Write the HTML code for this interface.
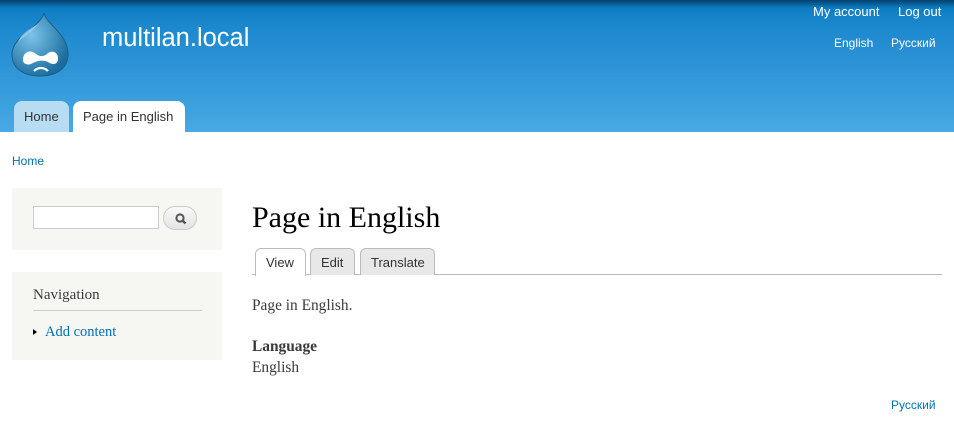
<!DOCTYPE html>
<html><head><meta charset="utf-8"><style>
*{margin:0;padding:0;box-sizing:border-box}
body{width:954px;height:431px;background:#fff;font-family:Georgia,"Liberation Serif",serif;position:relative;overflow:hidden}
#hdr{position:absolute;left:0;top:0;width:954px;height:132px;background:linear-gradient(#0779bf 0,#1c88ce 20%,#48a9e4 100%)}
#hdr .top{position:absolute;top:0;left:0;right:0;height:8px;background:linear-gradient(#03436e,rgba(7,121,191,0))}
.site{position:absolute;left:102px;top:24px;color:#fff;font:25.5px "Liberation Sans",sans-serif}
.sec{position:absolute;top:4px;color:#fff;font:13px "Liberation Sans",sans-serif}
.tab{position:absolute;top:101px;height:31px;border-radius:8px 8px 0 0;font:13px "Liberation Sans",sans-serif;color:#333;padding:8px 10px 0}
a{color:#0071b3;text-decoration:none}
.blk{position:absolute;left:12px;width:210px;background:#f6f6f2}
.lt{position:absolute;height:27px;top:248px;border:1px solid #bbb;border-bottom:none;border-radius:6px 6px 0 0;background:#e8e8e8;font:13px "Liberation Sans",sans-serif;color:#333;padding:6px 10px 0}
.p{position:absolute;left:252px;font-size:15.4px;color:#3b3b3b}
</style></head><body>
<div id="hdr"><div class="top"></div>
<svg style="position:absolute;left:10px;top:12px" width="60" height="66" viewBox="0 0 60 66">
<defs><radialGradient id="g" cx="35%" cy="35%" r="70%"><stop offset="0" stop-color="#7cc3ea"/><stop offset="1" stop-color="#1a6d9e"/></radialGradient></defs>
<path d="M34 1 C36 12 58 22 58 42 C58 57 46 64 30 64 C14 64 2 57 2 42 C2 24 30 16 34 1Z" fill="url(#g)" stroke="#1c5f88" stroke-width="1"/>
<path d="M8 30 C12 20 22 16 28 12 C22 20 14 24 8 30Z" fill="#a8dcf6" opacity=".7"/>
<path d="M13 48 C13 40 20 37 26 42 C30 45 34 45 38 41 C44 37 49 42 48 48 C47 53 42 53 38 50 C34 48 28 48 23 51 C18 54 13 52 13 48Z" fill="#fff"/>
<path d="M24 59 C28 55 34 55 38 59" stroke="#fff" stroke-width="2.2" fill="none"/>
</svg>
<div class="site">multilan.local</div>
<div class="sec" style="left:813px">My account</div>
<div class="sec" style="left:898px">Log out</div>
<div class="sec" style="left:834px;top:36px;font-size:12px">English</div>
<div class="sec" style="left:891px;top:36px;font-size:12px">Русский</div>
<div class="tab" style="left:14px;width:55px;background:#b8dcf2">Home</div>
<div class="tab" style="left:73px;width:112px;background:#fff">Page in English</div>
</div>
<a style="position:absolute;left:12px;top:154px;font:12px 'Liberation Sans',sans-serif">Home</a>
<div class="blk" style="top:188px;height:62px">
<div style="position:absolute;left:21px;top:18px;width:126px;height:23px;border:1px solid #ccc;background:#fff"></div>
<div style="position:absolute;left:151px;top:18px;width:34px;height:24px;border:1px solid #ccc;border-radius:12px;background:linear-gradient(#fafafa,#e4e4e4)">
<svg width="34" height="24" viewBox="0 0 34 24"><circle cx="16" cy="11" r="3.6" fill="none" stroke="#555" stroke-width="2"/><path d="M18.5 13.5 L21.5 16.5" stroke="#555" stroke-width="2.4"/></svg></div>
</div>
<div class="blk" style="top:272px;height:88px">
<div style="position:absolute;left:21px;top:15px;width:169px;font-size:15px;color:#3b3b3b;padding-bottom:6px;border-bottom:1px solid #ccc">Navigation</div>
<div style="position:absolute;left:21px;top:57px;width:0;height:0;border-left:4px solid #000;border-top:3.5px solid transparent;border-bottom:3.5px solid transparent"></div>
<a style="position:absolute;left:33px;top:52px;font-size:14.5px">Add content</a>
</div>
<div style="position:absolute;left:252px;top:201px;font-size:30px;color:#000">Page in English</div>
<div style="position:absolute;left:252px;top:274px;width:690px;border-top:1px solid #bbb"></div>
<div class="lt" style="left:255px;width:51px;background:#fff;height:28px">View</div>
<div class="lt" style="left:310px;width:45px">Edit</div>
<div class="lt" style="left:360px;width:75px">Translate</div>
<div class="p" style="top:297px">Page in English.</div>
<div class="p" style="top:338px;font-weight:bold">Language</div>
<div class="p" style="top:359px">English</div>
<a style="position:absolute;left:891px;top:398px;font:12px 'Liberation Sans',sans-serif">Русский</a>
</body></html>
